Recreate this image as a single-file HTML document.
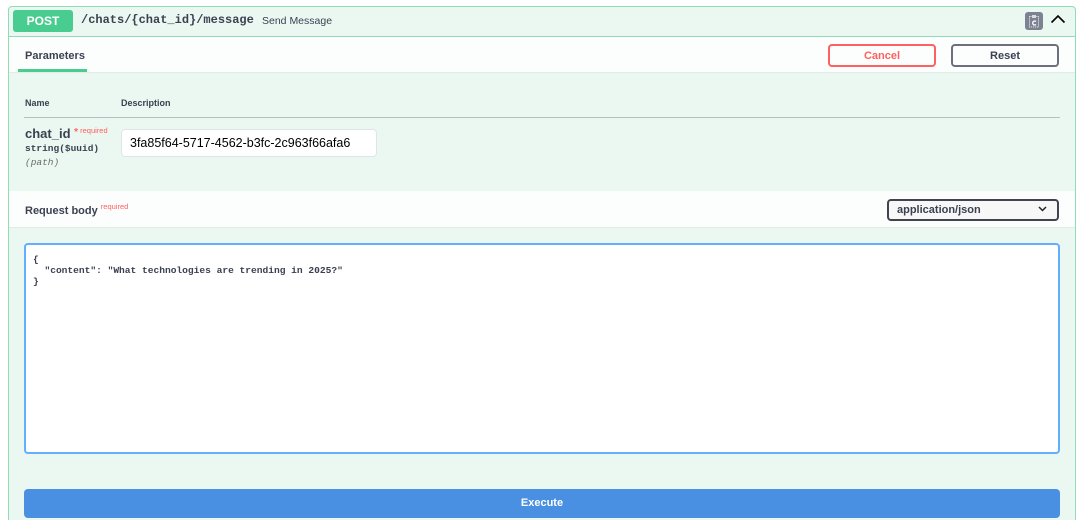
<!DOCTYPE html>
<html><head><meta charset="utf-8"><style>
*{box-sizing:border-box;margin:0;padding:0}
html,body{width:1080px;height:520px;overflow:hidden}
body{background:#fff;font-family:"Liberation Sans",sans-serif;color:#3b4151;position:relative}
.box{position:absolute;left:8px;top:6px;width:1068px;height:530px;border:1px solid #8fdcb6;border-radius:4px;background:#ebf7f1}
.abs{position:absolute}
.mono{font-family:"Liberation Mono",monospace}
.btn{position:absolute;height:23px;border:2px solid;border-radius:4px;background:transparent;font-weight:bold;font-size:11px;text-align:center;line-height:20px}
</style></head><body>
<div class="box"></div>
<div class="abs" style="left:9px;top:36px;width:1066px;height:1px;background:#8fdcb6"></div>
<div class="abs" style="left:13px;top:10px;width:60px;height:22px;background:#49cc90;border-radius:3px;color:#fff;font-weight:bold;font-size:12px;text-align:center;line-height:22px">POST</div>
<div class="abs mono" style="left:81px;top:13px;font-size:12px;font-weight:bold;color:#3b4151">/chats/{chat_id}/message</div>
<div class="abs" style="left:262px;top:15px;font-size:10.5px;color:#3b4151">Send Message</div>
<div class="abs" style="left:1025px;top:12px;width:18px;height:18px;background:#7d8293;border-radius:3px"></div>
<svg class="abs" style="left:1028px;top:14px" width="12" height="14" viewBox="0 0 12 14"><rect x="1.5" y="2.5" width="9" height="10.5" fill="none" stroke="#ddd" stroke-width="1" stroke-dasharray="1.2 0.8"/><rect x="4" y="1" width="4" height="3" fill="#ddd"/><path d="M8 7.5a2 2 0 1 0 0 3" fill="none" stroke="#fff" stroke-width="1.3"/></svg>
<svg class="abs" style="left:1050px;top:13px" width="16" height="12" viewBox="0 0 16 12"><path d="M1.5 9.5L8 3l6.5 6.5" fill="none" stroke="#000" stroke-width="1.6"/></svg>

<div class="abs" style="left:9px;top:37px;width:1066px;height:36px;background:rgba(255,255,255,.85);border-bottom:1px solid #e2ece7"></div>
<div class="abs" style="left:25px;top:50px;font-size:11px;font-weight:bold">Parameters</div>
<div class="abs" style="left:18px;top:69px;width:69px;height:3px;background:#49cc90"></div>
<div class="btn" style="left:828px;top:44px;width:108px;border-color:#ff6060;color:#ff6060">Cancel</div>
<div class="btn" style="left:951px;top:44px;width:108px;border-color:#6c707c;color:#3b4151">Reset</div>

<div class="abs" style="left:25px;top:98px;font-size:9px;font-weight:bold">Name</div>
<div class="abs" style="left:121px;top:98px;font-size:9px;font-weight:bold">Description</div>
<div class="abs" style="left:24px;top:117px;width:1036px;height:1px;background:#b9bec5"></div>
<div class="abs" style="left:25px;top:126px;font-size:13px;font-weight:bold">chat_id <span style="color:#ff6060;font-size:10px;vertical-align:3px">*</span><span style="color:#ff6060;font-size:7.5px;font-weight:normal;vertical-align:5px"> required</span></div>
<div class="abs mono" style="left:25px;top:143px;font-size:9.5px;font-weight:bold">string($uuid)</div>
<div class="abs mono" style="left:25px;top:157px;font-size:9.5px;font-style:italic;color:#6b6b6b">(path)</div>
<div class="abs" style="left:121px;top:129px;width:256px;height:28px;background:#fff;border:1px solid #e0e4ea;border-radius:4px;font-size:12.5px;color:#000;padding:6px 8px">3fa85f64-5717-4562-b3fc-2c963f66afa6</div>

<div class="abs" style="left:9px;top:191px;width:1066px;height:37px;background:rgba(255,255,255,.85);border-bottom:1px solid #e2ece7"></div>
<div class="abs" style="left:25px;top:202px;font-size:11px;font-weight:bold">Request body <span style="color:#ff6060;font-size:7.5px;font-weight:normal;vertical-align:5px">required</span></div>
<div class="abs" style="left:887px;top:199px;width:172px;height:22px;border:2px solid #41444e;border-radius:4px;background:#f7f7f7;font-size:11px;font-weight:bold;padding:2px 8px;line-height:15px">application/json</div>
<svg class="abs" style="left:1038px;top:206px" width="9" height="6" viewBox="0 0 9 6"><path d="M1 1l3.5 3.5L8 1" fill="none" stroke="#222" stroke-width="1.5"/></svg>

<div class="abs mono" style="left:24px;top:243px;width:1036px;height:211px;background:#fff;border:2px solid #61affe;border-radius:4px;padding:9px 7px;font-size:9.6px;font-weight:bold;line-height:11px;letter-spacing:-0.02px;white-space:pre;color:#3b4151">{
  "content": "What technologies are trending in 2025?"
}</div>

<div class="abs" style="left:24px;top:489px;width:1036px;height:29px;background:#4990e2;border-radius:4px;color:#fff;font-weight:bold;font-size:11px;text-align:center;line-height:29px">Execute</div>
</body></html>
